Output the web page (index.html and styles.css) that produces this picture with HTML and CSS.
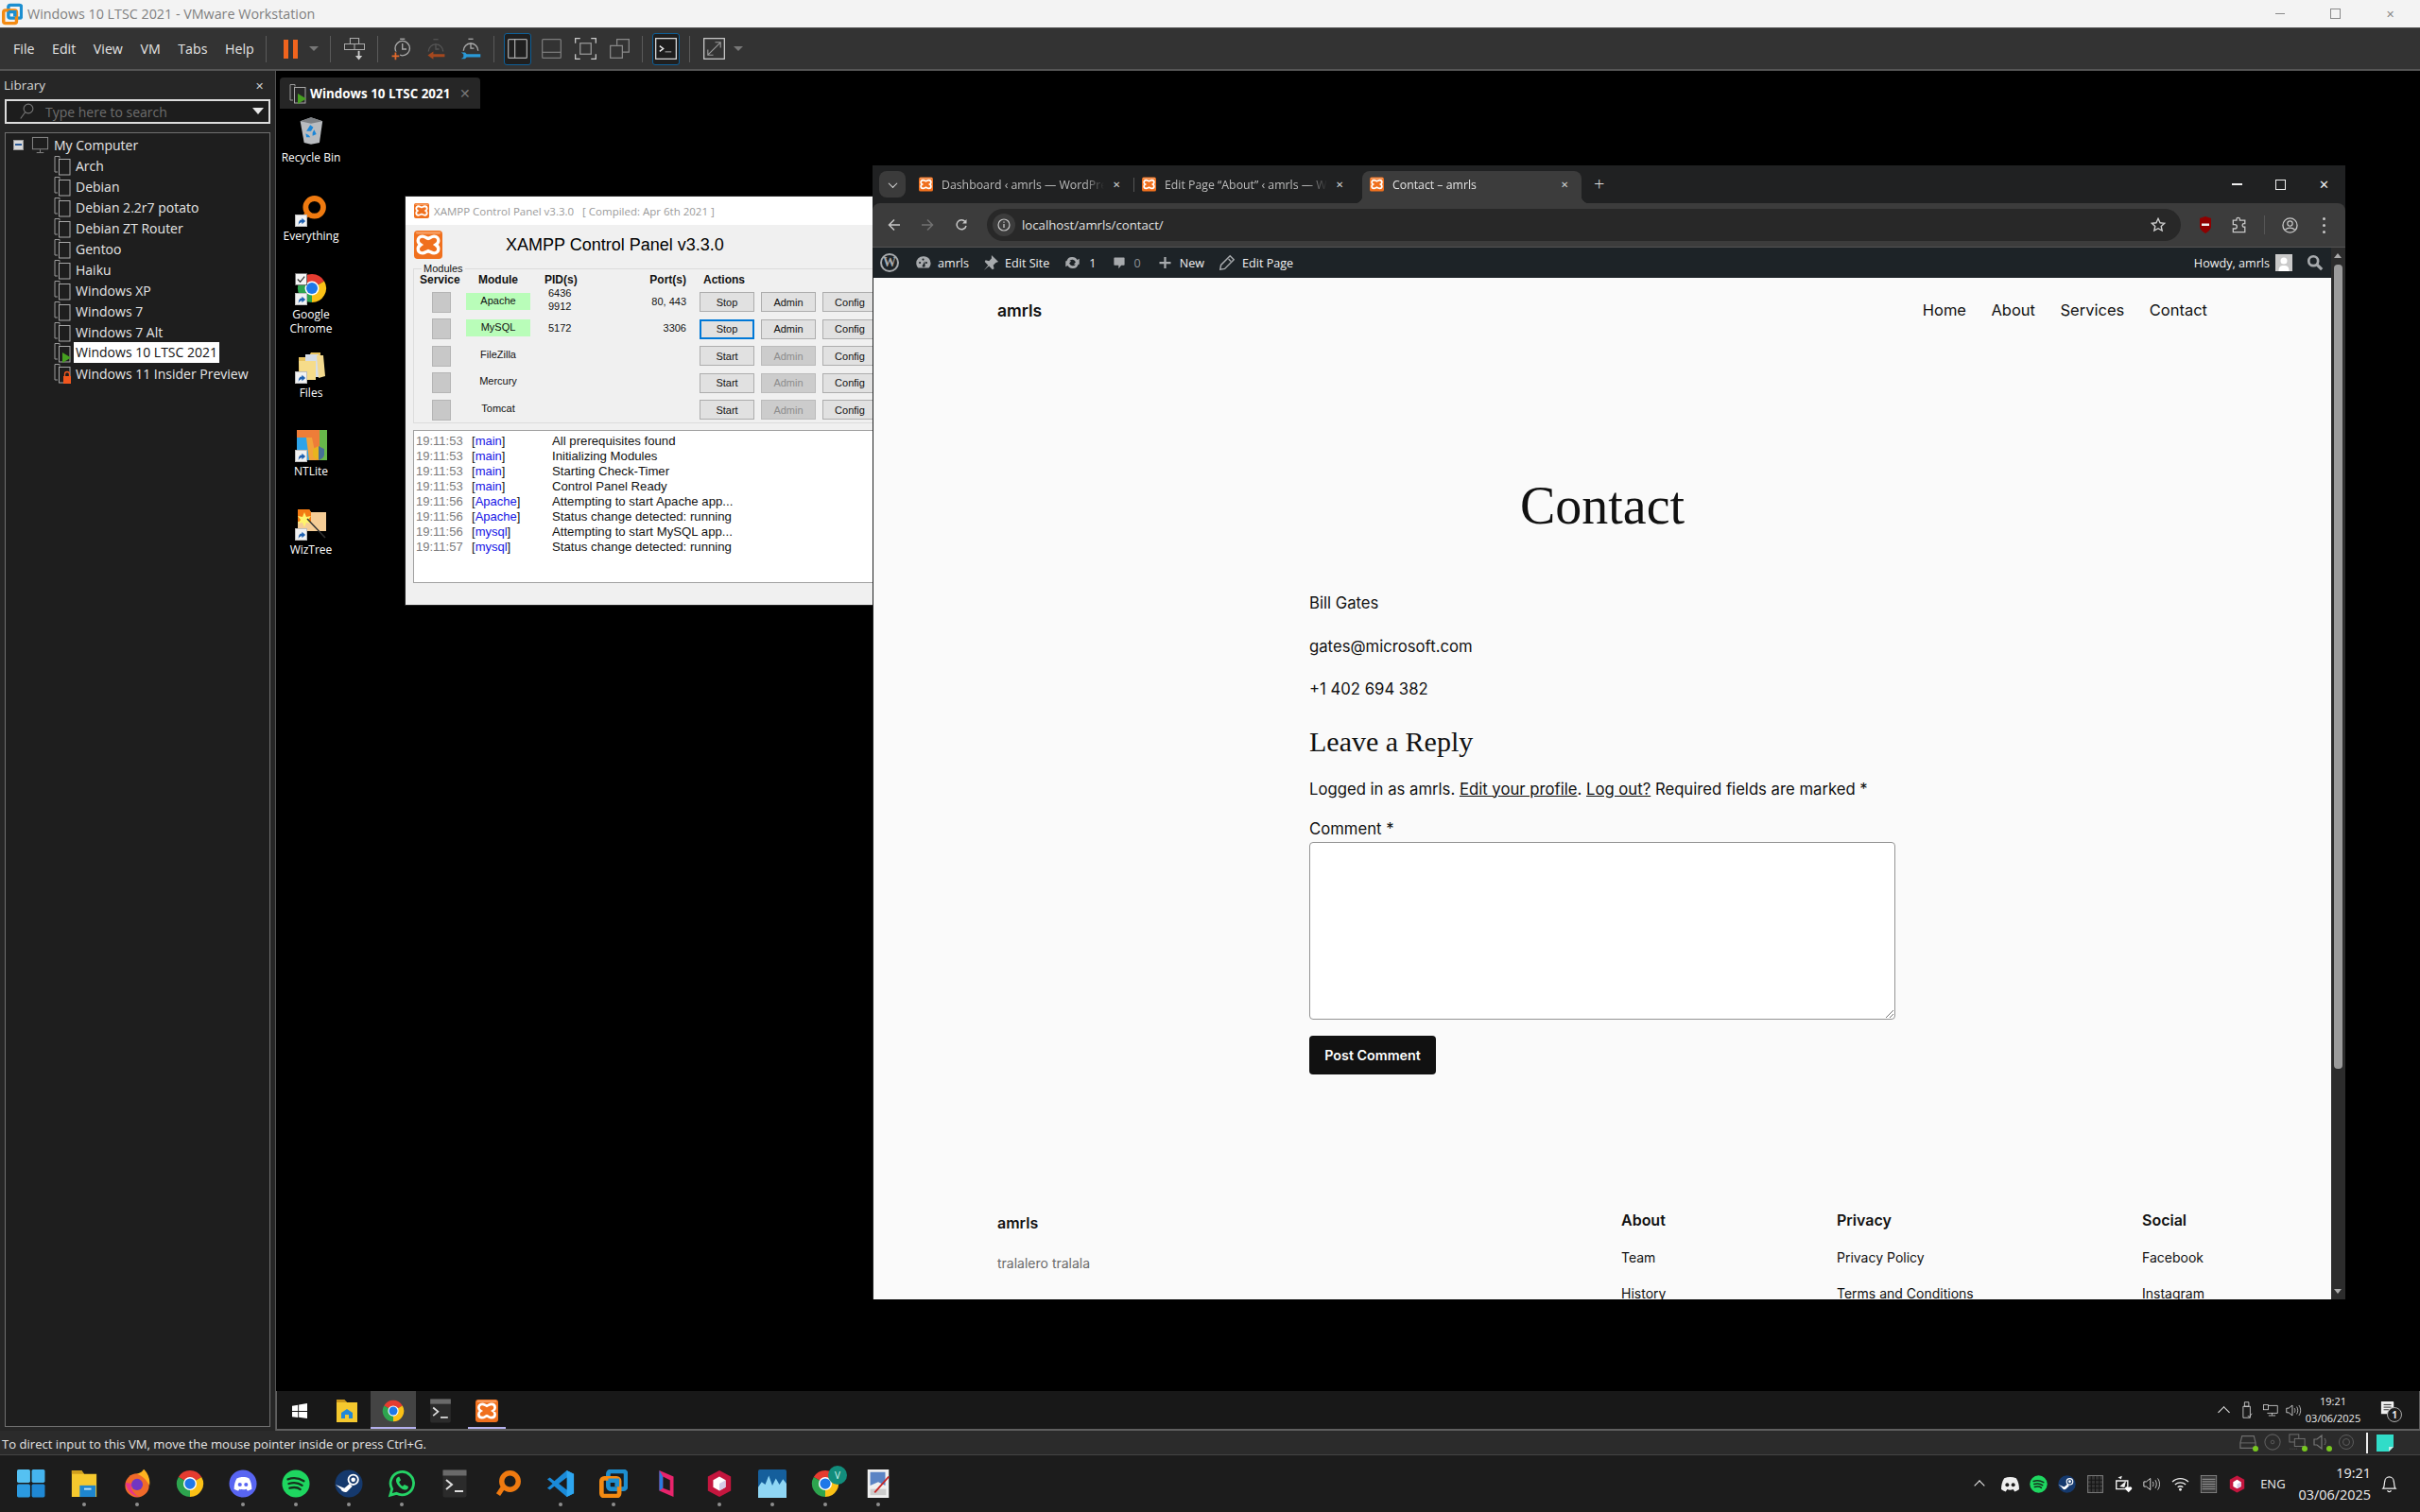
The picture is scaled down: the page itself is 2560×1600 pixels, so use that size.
FILE: index.html
```html
<!DOCTYPE html>
<html lang="en">
<head>
<meta charset="utf-8">
<title>Windows 10 LTSC 2021 - VMware Workstation</title>
<link rel="stylesheet" href="styles.css">
</head>
<body>
<svg class="sprite" width="0" height="0" aria-hidden="true">
  <defs>
    <symbol id="vmw" viewBox="0 0 32 32"><rect x="10" y="2" width="20" height="20" rx="3" fill="none" stroke="#1d8fd0" stroke-width="5"/><rect x="2.5" y="10" width="20" height="20" rx="3" fill="none" stroke="#f38a12" stroke-width="5"/><path d="M10 12.5h10v7" fill="none" stroke="#1d8fd0" stroke-width="5"/></symbol>
    <symbol id="xampp" viewBox="0 0 32 32"><rect width="32" height="32" rx="4" fill="#f0701e"/><rect x="2" y="1" width="28" height="3" rx="1.5" fill="#f79a5c"/><path d="M9.5 6.500C6 6.500 4.500 9 4.500 11.500C4.500 13.500 6 15 7.500 16C6 17 4.500 18.500 4.500 20.500C4.500 23 6 25.500 9.500 25.500C12 25.500 13.500 24 16 23C18.500 24 20 25.500 22.500 25.500C26 25.500 27.500 23 27.500 20.500C27.500 18.500 26 17 24.500 16C26 15 27.500 13.500 27.500 11.500C27.500 9 26 6.500 22.500 6.500C20 6.500 18.500 8 16 9C13.500 8 12 6.500 9.500 6.500Z" fill="none" stroke="#fff" stroke-width="3.600"/></symbol>
    <symbol id="vmi" viewBox="0 0 18 22"><path d="M6 3.500V1.500H1V18h3" fill="none" stroke="#9a9a9a"/><rect x="5.500" y="4.500" width="11.500" height="16.500" fill="none" stroke="#a8a8a8"/></symbol>
    <symbol id="vmplay" viewBox="0 0 18 22"><path d="M6 3.500V1.500H1V18h3" fill="none" stroke="#9a9a9a"/><rect x="5.500" y="4.500" width="11.500" height="16.500" fill="none" stroke="#a8a8a8"/><path d="M9 11l9 5.500-9 5.500z" fill="#46a020"/></symbol>
    <symbol id="vmlock" viewBox="0 0 18 22"><path d="M6 3.500V1.500H1V18h3" fill="none" stroke="#9a9a9a"/><rect x="5.500" y="4.500" width="11.500" height="16.500" fill="none" stroke="#a8a8a8"/><rect x="10" y="14" width="8" height="8" fill="#f0561e"/><path d="M11.500 14v-2a2.500 2.500 0 0 1 5 0v2" fill="none" stroke="#f0561e" stroke-width="1.300"/></symbol>
    <symbol id="monitor" viewBox="0 0 20 20"><rect x="1.500" y="1.500" width="17" height="13" fill="none" stroke="#8a8a8a"/><path d="M10 15v3M6 18.500h8" stroke="#8a8a8a"/></symbol>
    <symbol id="mag" viewBox="0 0 22 24"><circle cx="13" cy="8" r="6.500" fill="none" stroke="#777" stroke-width="1.500"/><path d="M8.500 13L2 22" stroke="#777" stroke-width="1.500"/></symbol>
    <symbol id="snap" viewBox="0 0 24 26"><path d="M7 .5h10v6.500H7zM.5 7h11.500v6.500H.5zM12 7h11.500v6.500H12z" fill="none" stroke="#aaa" stroke-width="1.200"/><path d="M17 15v6" stroke="#ccc" stroke-width="2"/><path d="M13 20.500h8l-4 5z" fill="#ccc"/></symbol>
    <symbol id="clockadd" viewBox="0 0 24 28"><circle cx="14" cy="13" r="9" fill="none" stroke="#aaa" stroke-width="1.600"/><path d="M11 1.500h6" stroke="#aaa" stroke-width="1.600"/><path d="M14 7v7h5" fill="none" stroke="#aaa" stroke-width="1.600"/><rect x="0" y="17" width="11" height="11" fill="#333"/><path d="M5.500 18v9M1 22.500h9" stroke="#e46a2c" stroke-width="2"/></symbol>
    <symbol id="clockback" viewBox="0 0 24 28"><path d="M3 17a9 9 0 1 1 18 0" fill="none" stroke="#555" stroke-width="1.600"/><path d="M9 2h6" stroke="#555" stroke-width="1.500"/><path d="M12 7v7h4" fill="none" stroke="#555" stroke-width="1.500"/><path d="M2 21.500L9 17v3h14v3.500H9v3z" fill="#a4481f"/></symbol>
    <symbol id="clockwrench" viewBox="0 0 24 28"><path d="M3 16a9 9 0 1 1 18 0" fill="none" stroke="#aaa" stroke-width="1.600"/><path d="M9 1.500h6" stroke="#aaa" stroke-width="1.500"/><path d="M12 6v7h4" fill="none" stroke="#aaa" stroke-width="1.500"/><path d="M0 18h5l2 2h17v4H7l-2 2H0l3-2v-4z" fill="#2a9ad8"/></symbol>
    <symbol id="sidebar" viewBox="0 0 22 22"><rect x=".7" y=".7" width="20.600" height="20.600" rx="1" fill="none" stroke="#aaa" stroke-width="1.300"/><path d="M8 1v20" stroke="#aaa" stroke-width="1.300"/></symbol>
    <symbol id="thumb" viewBox="0 0 22 22"><rect x=".7" y=".7" width="20.600" height="20.600" rx="1" fill="none" stroke="#7c7c7c" stroke-width="1.300"/><path d="M1 15h20" stroke="#7c7c7c" stroke-width="1.300"/></symbol>
    <symbol id="full" viewBox="0 0 24 24"><path d="M.7 6V.7H6M18 .7h5.300V6M.7 18v5.300H6M18 23.300h5.300V18" fill="none" stroke="#ccc" stroke-width="1.300"/><rect x="6" y="6" width="12" height="12" fill="none" stroke="#999" stroke-width="1.300"/></symbol>
    <symbol id="unity" viewBox="0 0 22 22"><path d="M8 7V.7h13.300v14H14" fill="none" stroke="#8a8a8a" stroke-width="1.300"/><rect x=".7" y="7.700" width="13.300" height="13.600" fill="none" stroke="#8a8a8a" stroke-width="1.300"/></symbol>
    <symbol id="console" viewBox="0 0 24 24"><rect x=".7" y=".7" width="22.600" height="22.600" fill="#1d1d1d" stroke="#ddd" stroke-width="1.300"/><path d="M5 9l4 3-4 3" fill="none" stroke="#eee" stroke-width="1.500"/><path d="M11 15.500h7" stroke="#999" stroke-width="1.200"/></symbol>
    <symbol id="stretch" viewBox="0 0 24 24"><rect x=".7" y=".7" width="22.600" height="22.600" fill="none" stroke="#ccc" stroke-width="1.300"/><path d="M5 19L19 5M13 5h6v6M5 13v6h6" fill="none" stroke="#999" stroke-width="1.200"/></symbol>
    <symbol id="recycle" viewBox="0 0 32 36"><path d="M2 6l14-5 15 5-4 28-11 2-9-2z" fill="#b9bcc0"/><path d="M2 6l14 3 15-3-15-5z" fill="#7d8084"/><path d="M10 19l5-8 4 3-3 5zM20 17l3 6-5 2v-4zM9 22l4 2 2 3h-5z" fill="#1a86d8"/></symbol>
    <symbol id="eye" viewBox="0 0 34 36"><circle cx="20" cy="15" r="10.500" fill="none" stroke="#ef7a10" stroke-width="6.500"/><path d="M11 23L5 32" stroke="#ef7a10" stroke-width="6"/></symbol>
    <symbol id="short" viewBox="0 0 14 14"><rect width="14" height="14" fill="#f2f2f2"/><rect x=".5" y=".5" width="13" height="13" fill="none" stroke="#bbb"/><path d="M4 12c0-4 1-6 4-6V4l4 3.500-4 3.500V9c-2 0-3 1-4 3z" fill="#1e60b0"/></symbol>
    <symbol id="chrome" viewBox="0 0 32 32"><path d="M16 16L3 8.500A15 15 0 0 1 29 8.500z" fill="#e53c30"/><path d="M16 16L29 8.500A15 15 0 0 1 16 31z" fill="#fbc116"/><path d="M16 16V31A15 15 0 0 1 3 8.500z" fill="#2da44e"/><circle cx="16" cy="16" r="7.500" fill="#fff"/><circle cx="16" cy="16" r="6" fill="#1f78e8"/></symbol>
    <symbol id="folderd" viewBox="0 0 30 32"><path d="M1 6h10l3-5h10v26H1z" fill="#e8c25e"/><path d="M8 3h14v24H8z" fill="#d5dde8"/><path d="M20 4h7l2 22-7 2z" fill="#f3d98e"/><path d="M1 10h18v20H3z" fill="#f6dc8a"/></symbol>
    <symbol id="ntlite" viewBox="0 0 32 32"><rect width="32" height="32" fill="#66b84a"/><path d="M0 0h24v32H0z" fill="#ee7d38"/><path d="M0 8h14v24H0z" fill="#2ea3e8"/><path d="M10 8h6l5 24h-8z" fill="#f2a23a"/><path d="M17 20l6-3 6 3v6c0 3-3 5-6 6-3-1-6-3-6-6z" fill="#e8b41e"/><path d="M23 17v15c3-1 6-3 6-6v-6z" fill="#1d5fb4" opacity=".8"/></symbol>
    <symbol id="wiz" viewBox="0 0 32 32"><path d="M1 1h12l2 3h16v20H1z" fill="#f5cd96"/><path d="M1 1h12l2 3v10H1z" fill="#f27a12"/><path d="M8 4l2 5 5-1-3 4 3 4-5-1-2 5-2-5-5 1 3-4-3-4 5 1z" fill="#fff46c"/><path d="M11 11l19 20" stroke="#333" stroke-width="1.500"/></symbol>
    <symbol id="check" viewBox="0 0 14 14"><rect width="14" height="14" fill="#f5f5f5"/><rect x=".5" y=".5" width="13" height="13" fill="none" stroke="#666"/><path d="M3 7l3 3 5-6" fill="none" stroke="#333" stroke-width="1.300"/></symbol>
    <symbol id="win10" viewBox="0 0 18 18"><path d="M0 3l7-1v7H0zM8 1.800L18 0v9H8zM0 10h7v7l-7-1zM8 10h10v8L8 16.500z" fill="#fff"/></symbol>
    <symbol id="explorer" viewBox="0 0 24 26"><path d="M1 1h8l3 3h11v21H1z" fill="#f4c82e"/><path d="M1 1h8l3 3H1z" fill="#c9961a"/><path d="M6 21v-6l6-4 6 4v6h-4v-4h-4v4z" fill="#2188d8"/></symbol>
    <symbol id="term" viewBox="0 0 26 30"><rect x=".5" y=".5" width="25" height="29" rx="2" fill="#2b2b2b"/><rect x=".5" y=".5" width="25" height="6" fill="#6a6a6a"/><path d="M4 11l6 5-6 5" fill="none" stroke="#ddd" stroke-width="2"/><path d="M13 23h9" stroke="#ddd" stroke-width="2"/></symbol>
    <symbol id="win11" viewBox="0 0 28 28"><rect width="13" height="13" rx="1.500" fill="#55c1f2"/><rect x="14.500" width="13" height="13" rx="1.500" fill="#45b4ee"/><rect y="14.500" width="13" height="13" rx="1.500" fill="#2b9ae0"/><rect x="14.500" y="14.500" width="13" height="13" rx="1.500" fill="#1f88d4"/></symbol>
    <symbol id="files11" viewBox="0 0 30 32"><path d="M1 1h11l3 4h14v26H1z" fill="#f6c92e"/><path d="M1 1h11l3 4H1z" fill="#cf9f1e"/><rect x="10" y="18" width="18" height="13" fill="#1e86cf"/><rect x="15" y="21" width="8" height="2" fill="#bfe3fa"/></symbol>
    <symbol id="firefox" viewBox="0 0 30 32"><circle cx="15" cy="18" r="13.500" fill="#f06a2a"/><path d="M15 5c4-1 8-4 7-6 6 6 8 12 7 19-3-6-8-11-14-13z" fill="#ffb31f"/><circle cx="15" cy="17" r="6.500" fill="#7236c2"/><path d="M2 15c1 8 7 15 16 16-7-3-11-9-9-15z" fill="#e8348c"/></symbol>
    <symbol id="discord" viewBox="0 0 32 32"><circle cx="16" cy="16" r="15.500" fill="#5865f2"/><path d="M9 10c4-2 10-2 14 0 2 3 3 8 3 12-2 1-4 2-5 2l-1-2c-3 1-5 1-8 0l-1 2c-1 0-3-1-5-2 0-4 1-9 3-12z" fill="#fff"/><circle cx="12.500" cy="17" r="2.200" fill="#5865f2"/><circle cx="19.500" cy="17" r="2.200" fill="#5865f2"/></symbol>
    <symbol id="discordw" viewBox="0 0 24 20"><path d="M4 2C9 0 15 0 20 2c3 4 4 10 4 15-2 1-4 3-6 3l-2-3c-3 1-5 1-8 0l-2 3c-2 0-4-2-6-3 0-5 1-11 4-15z" fill="#eee"/><circle cx="8" cy="11" r="2.500" fill="#1c1c1c"/><circle cx="16" cy="11" r="2.500" fill="#1c1c1c"/></symbol>
    <symbol id="spotify" viewBox="0 0 32 32"><circle cx="16" cy="16" r="15.500" fill="#1ed760"/><path d="M7 11c6-2 13-1 18 2M8 16c5-1.500 11-1 15 2M9 21c4-1 9-1 12 1.500" fill="none" stroke="#16301d" stroke-width="2.500" stroke-linecap="round"/></symbol>
    <symbol id="steam" viewBox="0 0 32 32"><circle cx="16" cy="16" r="15.500" fill="#15396d"/><circle cx="21" cy="11.500" r="5.500" fill="none" stroke="#fff" stroke-width="2"/><circle cx="21" cy="11.500" r="2.500" fill="#fff"/><path d="M1 17l10 4 6-5 3 3-6 6a5 5 0 0 1-7-3z" fill="#fff"/></symbol>
    <symbol id="whatsapp" viewBox="0 0 32 32"><path d="M3 29l2-7A13 13 0 1 1 10 27z" fill="none" stroke="#25d366" stroke-width="3"/><path d="M11 9c-2 2-2 5 1 9 3 4 6 5 9 5 2-1 3-3 2-4l-4-2-2 2c-2-1-3-3-4-5l2-2-2-4z" fill="#25d366"/></symbol>
    <symbol id="vscode" viewBox="0 0 32 32"><path d="M23 1l8 4v22l-8 4L9 19l-5 4-3-2 6-5-6-5 3-2 5 4z" fill="#1a8ad8"/><path d="M23 1l8 4v22l-8 4z" fill="#2da6f0"/><path d="M23 9l-9 7 9 7z" fill="#1c1c1c"/></symbol>
    <symbol id="pink" viewBox="0 0 20 32"><path d="M2 1l16 7v23L2 24z" fill="#e8246c"/><path d="M6 8l8 4v12l-8-3z" fill="#1c1c1c"/><path d="M2 1v23l4-3V8z" fill="#2a7be0"/></symbol>
    <symbol id="hex" viewBox="0 0 28 32"><path d="M14 1l13 7v16l-13 7-13-7V8z" fill="#c4163e"/><path d="M14 8l7 4v8l-7 4-7-4v-8z" fill="#fff"/><path d="M14 16l7-4v8l-7 4z" fill="#d6cbe8"/></symbol>
    <symbol id="wave" viewBox="0 0 32 32"><rect width="32" height="32" rx="2" fill="#155f9c"/><path d="M0 20l4-6 4 3 4-10 4 11 4-8 4 7 4-6 4 5v16H0z" fill="#8fd6f4"/></symbol>
    <symbol id="pen" viewBox="0 0 24 32"><rect width="24" height="32" fill="#f0f0f0"/><path d="M3 3h17v15L12 14l-9 4z" fill="#5b84c4"/><rect x="3" y="22" width="18" height="7" fill="#ccc"/><path d="M8 26L24 8" stroke="#c82424" stroke-width="2"/></symbol>
    <symbol id="usb" viewBox="0 0 14 24"><path d="M3.500 1h6v6h-6zM1.500 7h10v16h-10z" fill="#1c1c1c" stroke="#eee"/><path d="M8 20l2 2 4-5" fill="none" stroke="#ddd"/></symbol>
    <symbol id="netw" viewBox="0 0 22 18"><path d="M5 2h16v11H6M13 13v3M8 16.500h10" fill="none" stroke="#eee"/><rect x=".5" y="1" width="7" height="7" fill="#1c1c1c" stroke="#eee"/></symbol>
    <symbol id="speaker" viewBox="0 0 22 18"><path d="M1 6h3l5-4v14l-5-4H1z" fill="none" stroke="#eee"/><path d="M12 6c1 2 1 4 0 6M15 4c2 3 2 7 0 10M18 2c3 4 3 10 0 14" fill="none" stroke="#ddd"/></symbol>
    <symbol id="note" viewBox="0 0 18 18"><path d="M1 1h14a1 1 0 0 1 1 1v11h-3v3H1z" fill="#eee"/><path d="M4 5h9M4 8h9M4 11h6" stroke="#1c1c1c"/></symbol>
    <symbol id="hdd" viewBox="0 0 20 16"><path d="M3 1h14l2 8v6H1V9z" fill="none" stroke="#6e6e6e" stroke-width="1.300"/><path d="M1 9h18" stroke="#6e6e6e"/></symbol>
    <symbol id="cd" viewBox="0 0 20 20"><circle cx="10" cy="10" r="9" fill="none" stroke="#5c5c5c" stroke-width="1.200"/><circle cx="10" cy="10" r="2" fill="none" stroke="#5c5c5c"/></symbol>
    <symbol id="netvm" viewBox="0 0 20 20"><rect x="1" y="1" width="11" height="9" fill="none" stroke="#757575"/><rect x="7" y="6" width="12" height="9" fill="#2b2b2b" stroke="#757575"/><path d="M1 18h10" stroke="#555" stroke-dasharray="1 1"/></symbol>
    <symbol id="soundvm" viewBox="0 0 18 18"><path d="M1 6h3l5-4v14l-5-4H1z" fill="none" stroke="#757575" stroke-width="1.200"/><path d="M12 5c1.500 2 1.500 5 0 7" fill="none" stroke="#757575"/></symbol>
    <symbol id="webcam" viewBox="0 0 18 18"><circle cx="9" cy="9" r="7.500" fill="none" stroke="#5c5c5c"/><circle cx="9" cy="9" r="3.500" fill="none" stroke="#5c5c5c"/></symbol>
    <symbol id="sticky" viewBox="0 0 18 18"><path d="M0 0h18v13l-5 5H0z" fill="#31dcc8"/><path d="M13 18v-5h5z" fill="#bfeee8"/></symbol>
    <symbol id="trayg" viewBox="0 0 16 18"><rect x=".5" y=".5" width="15" height="17" fill="#333" stroke="#777"/><path d="M4 1v16M8 1v16M12 1v16M1 5h14M1 9h14M1 13h14" stroke="#151515"/></symbol>
    <symbol id="sync" viewBox="0 0 22 22"><path d="M2 7h14v10H2z" fill="none" stroke="#eee" stroke-width="1.600"/><path d="M4 3l5-2-1 4zM6 14l8-7-2 8z" fill="#eee"/><path d="M17 21l-4-4c-1-2 2-4 4-2 2-2 5 0 4 2z" fill="#fff"/></symbol>
    <symbol id="wifi" viewBox="0 0 20 16"><path d="M1 5.500c5-5 13-5 18 0M4 8.500c3.500-3 8.500-3 12 0M7 11.500c2-1.500 4-1.500 6 0" fill="none" stroke="#eee" stroke-width="1.300"/><circle cx="10" cy="14" r="1.500" fill="#eee"/></symbol>
    <symbol id="tray2" viewBox="0 0 20 22"><rect x=".5" y=".5" width="19" height="21" fill="#3a3a3a" stroke="#888"/><path d="M2 5h16M2 8h16M2 11h16M2 14h16M2 17h16" stroke="#aaa"/></symbol>
    <symbol id="bell" viewBox="0 0 18 20"><path d="M2 15c2-2 1-5 2-8a5 5 0 0 1 10 0c1 3 0 6 2 8z" fill="none" stroke="#eee" stroke-width="1.300"/><path d="M7 17c.5 2 3.500 2 4 0" fill="none" stroke="#eee" stroke-width="1.300"/></symbol>
    <symbol id="shield" viewBox="0 0 14 18"><path d="M1 2l6-2 6 2v8c0 4-3 6-6 8-3-2-6-4-6-8z" fill="#8f0000"/><rect x="3" y="7.500" width="8" height="2.500" fill="#eee"/></symbol>
    <symbol id="ext" viewBox="0 0 18 20"><path d="M1.500 4.500h4v-1a2 2 0 0 1 4 0v1h6v4h-1a2 2 0 0 0 0 4h1v6h-14v-4h2a2 2 0 0 0 0-5h-2z" fill="none" stroke="#c7c7c7" stroke-width="1.500"/></symbol>
    <symbol id="profile" viewBox="0 0 18 18"><circle cx="9" cy="9" r="8" fill="none" stroke="#c7c7c7" stroke-width="1.400"/><circle cx="9" cy="7" r="2.800" fill="none" stroke="#c7c7c7" stroke-width="1.300"/><path d="M3.500 14c3-3 8-3 11 0" fill="none" stroke="#c7c7c7" stroke-width="1.300"/></symbol>
    <symbol id="star" viewBox="0 0 18 18"><path d="M9 1.500l2.300 5 5.200.6-3.900 3.500 1.100 5.200L9 13.200l-4.700 2.600 1.100-5.200L1.500 7.100l5.200-.6z" fill="none" stroke="#d0d0d0" stroke-width="1.500"/></symbol>
    <symbol id="back" viewBox="0 0 14 14"><path d="M13 7H2M7 1.500L1.500 7 7 12.500" fill="none" stroke="currentColor" stroke-width="1.500"/></symbol>
    <symbol id="forward" viewBox="0 0 14 14"><path d="M1 7h11M7 1.500L12.500 7 7 12.500" fill="none" stroke="currentColor" stroke-width="1.500"/></symbol>
    <symbol id="reload" viewBox="0 0 14 14"><path d="M12 8a5 5 0 1 1-1-4.500" fill="none" stroke="#c7c7c7" stroke-width="1.500"/><path d="M12.500 1v4.500H8z" fill="#c7c7c7"/></symbol>
    <symbol id="info" viewBox="0 0 14 14"><circle cx="7" cy="7" r="6" fill="none" stroke="#c7c7c7" stroke-width="1.200"/><path d="M7 6v4M7 3.500v1.200" stroke="#c7c7c7" stroke-width="1.300"/></symbol>
    <symbol id="dash-home" viewBox="0 0 20 20"><path d="M10 2a8.500 8.500 0 0 0-8.500 8.500c0 2.500 1 4.500 2.500 6h13c1.500-1.500 2.500-3.500 2.500-6A8.500 8.500 0 0 0 10 2z" fill="#a7aaad"/><circle cx="6" cy="10" r="1.300" fill="#1d2327"/><circle cx="10" cy="6" r="1.300" fill="#1d2327"/><circle cx="14" cy="10" r="1.300" fill="#1d2327"/><path d="M9 14l3-6 .5 6a1.800 1.800 0 0 1-3.500 0z" fill="#1d2327"/></symbol>
    <symbol id="dash-pin" viewBox="0 0 20 20"><path d="M11 1l8 8-3 1-3 3 1 4-2 1-4-4-6 5 5-6-4-4 1-2 4 1 3-3z" fill="#a7aaad"/></symbol>
    <symbol id="dash-update" viewBox="0 0 20 20"><path d="M10 3a7 7 0 0 1 6 3.500L18.500 5v7h-7l2.500-2.500A4.500 4.500 0 0 0 6 8H2.800A7 7 0 0 1 10 3zM10 17a7 7 0 0 1-6-3.500L1.500 15V8h7L6 10.500A4.500 4.500 0 0 0 14 12h3.200A7 7 0 0 1 10 17z" fill="#a7aaad"/></symbol>
    <symbol id="dash-comment" viewBox="0 0 20 20"><path d="M3 2h14a1 1 0 0 1 1 1v10a1 1 0 0 1-1 1h-4l-4 5v-5H3a1 1 0 0 1-1-1V3a1 1 0 0 1 1-1z" fill="#a7aaad"/></symbol>
    <symbol id="dash-plus" viewBox="0 0 20 20"><path d="M8.500 2h3v6.500H18v3h-6.500V18h-3v-6.500H2v-3h6.500z" fill="#a7aaad"/></symbol>
    <symbol id="dash-pencil" viewBox="0 0 20 20"><path d="M14 1l5 5L7 18l-6 1 1-6zM12 5l3 3" fill="none" stroke="#a7aaad" stroke-width="1.800"/></symbol>
    <symbol id="dash-search" viewBox="0 0 20 20"><circle cx="8" cy="8" r="5.500" fill="none" stroke="#a7aaad" stroke-width="3"/><path d="M12 12l6 6" stroke="#a7aaad" stroke-width="3.500"/></symbol>
    <symbol id="avatar" viewBox="0 0 18 18"><rect width="18" height="18" fill="#c9c9c9"/><circle cx="9" cy="7" r="3.500" fill="#fff"/><path d="M3.500 18c0-5 2-6 5.500-6s5.500 1 5.500 6z" fill="#fff"/></symbol>
  </defs>
</svg>

<div class="app">
  <header class="titlebar">
    <svg class="ic-logo"><use href="#vmw"/></svg>
    <span class="title-text">Windows 10 LTSC 2021 - VMware Workstation</span>
    <div class="winctl">
      <span class="wc wc-min"></span>
      <span class="wc wc-max"></span>
      <span class="wc wc-close">&#10005;</span>
    </div>
  </header>

  <nav class="toolbar">
    <div class="menu"><span>File</span><span>Edit</span><span>View</span><span>VM</span><span>Tabs</span><span>Help</span></div>
    <i class="sep"></i>
    <div class="slot slot-pause"><span class="pause"></span><span class="caret"></span></div>
    <i class="sep"></i>
    <div class="slot slot-snap"><svg class="ti ti-22"><use href="#snap"/></svg></div>
    <i class="sep"></i>
    <div class="slot slot-clocks"><svg class="ti ti-22"><use href="#clockadd"/></svg><svg class="ti ti-22"><use href="#clockback"/></svg><svg class="ti ti-22"><use href="#clockwrench"/></svg></div>
    <i class="sep"></i>
    <div class="slot slot-views">
      <span class="tbtn on"><svg class="ti ti-21"><use href="#sidebar"/></svg></span>
      <span class="tbtn"><svg class="ti ti-21"><use href="#thumb"/></svg></span>
      <span class="tbtn"><svg class="ti ti-23"><use href="#full"/></svg></span>
      <span class="tbtn"><svg class="ti ti-21"><use href="#unity"/></svg></span>
    </div>
    <i class="sep"></i>
    <div class="slot slot-console"><span class="tbtn on"><svg class="ti ti-23"><use href="#console"/></svg></span></div>
    <i class="sep"></i>
    <div class="slot slot-stretch"><svg class="ti ti-23"><use href="#stretch"/></svg><span class="caret"></span></div>
  </nav>

  <main class="work">
    <aside class="library">
      <div class="lib-head"><span>Library</span><span class="lib-x">&#10005;</span></div>
      <div class="lib-search"><svg class="lib-mag"><use href="#mag"/></svg><span>Type here to search</span><i class="lib-caret"></i></div>
      <div class="tree">
        <div class="tree-root"><span class="expander"></span><svg class="tree-mon"><use href="#monitor"/></svg><span>My Computer</span></div>
        <div class="tree-item"><svg class="vm"><use href="#vmi"/></svg><span>Arch</span></div>
        <div class="tree-item"><svg class="vm"><use href="#vmi"/></svg><span>Debian</span></div>
        <div class="tree-item"><svg class="vm"><use href="#vmi"/></svg><span>Debian 2.2r7 potato</span></div>
        <div class="tree-item"><svg class="vm"><use href="#vmi"/></svg><span>Debian ZT Router</span></div>
        <div class="tree-item"><svg class="vm"><use href="#vmi"/></svg><span>Gentoo</span></div>
        <div class="tree-item"><svg class="vm"><use href="#vmi"/></svg><span>Haiku</span></div>
        <div class="tree-item"><svg class="vm"><use href="#vmi"/></svg><span>Windows XP</span></div>
        <div class="tree-item"><svg class="vm"><use href="#vmi"/></svg><span>Windows 7</span></div>
        <div class="tree-item"><svg class="vm"><use href="#vmi"/></svg><span>Windows 7 Alt</span></div>
        <div class="tree-item"><svg class="vm"><use href="#vmplay"/></svg><span class="selected">Windows 10 LTSC 2021</span></div>
        <div class="tree-item"><svg class="vm"><use href="#vmlock"/></svg><span>Windows 11 Insider Preview</span></div>
      </div>
    </aside>

    <section class="guest">
      <div class="vm-tabs">
        <div class="vm-tab"><svg class="vm"><use href="#vmplay"/></svg><b>Windows 10 LTSC 2021</b><span class="vm-tab-x">&#10005;</span></div>
      </div>
      <div class="desktop">
        <div class="shortcuts">
          <div class="sc"><span class="sc-art"><svg class="art art-bin"><use href="#recycle"/></svg></span><span class="sc-label">Recycle Bin</span></div>
          <div class="sc"><span class="sc-art"><svg class="art"><use href="#eye"/></svg><svg class="badge"><use href="#short"/></svg></span><span class="sc-label">Everything</span></div>
          <div class="sc"><span class="sc-art"><svg class="art"><use href="#chrome"/></svg><svg class="badge"><use href="#short"/></svg><svg class="badge badge-top"><use href="#check"/></svg></span><span class="sc-label">Google<br>Chrome</span></div>
          <div class="sc"><span class="sc-art"><svg class="art"><use href="#folderd"/></svg><svg class="badge"><use href="#short"/></svg></span><span class="sc-label">Files</span></div>
          <div class="sc"><span class="sc-art"><svg class="art"><use href="#ntlite"/></svg><svg class="badge"><use href="#short"/></svg></span><span class="sc-label">NTLite</span></div>
          <div class="sc"><span class="sc-art"><svg class="art"><use href="#wiz"/></svg><svg class="badge"><use href="#short"/></svg></span><span class="sc-label">WizTree</span></div>
        </div>

        <article class="xampp">
          <div class="x-title"><svg class="x-fav"><use href="#xampp"/></svg><span>XAMPP Control Panel v3.3.0 &nbsp; [ Compiled: Apr 6th 2021 ]</span></div>
          <div class="x-body">
            <div class="x-head"><svg class="x-logo"><use href="#xampp"/></svg><h2>XAMPP Control Panel v3.3.0</h2></div>
            <fieldset class="x-group">
              <legend>Modules</legend>
              <div class="x-labels"><b>Service</b><b>Module</b><b>PID(s)</b><b class="tr">Port(s)</b><b class="x-act">Actions</b></div>
              <div class="x-grid"><i class="stat"></i><span class="mod on">Apache</span><span class="pid">6436<br>9912</span><span class="port">80, 443</span><span class="btn">Stop</span><span class="btn">Admin</span><span class="btn">Config</span></div>
              <div class="x-grid"><i class="stat"></i><span class="mod on">MySQL</span><span class="pid pid-1">5172</span><span class="port">3306</span><span class="btn focus">Stop</span><span class="btn">Admin</span><span class="btn">Config</span></div>
              <div class="x-grid"><i class="stat"></i><span class="mod">FileZilla</span><span></span><span></span><span class="btn">Start</span><span class="btn off">Admin</span><span class="btn">Config</span></div>
              <div class="x-grid"><i class="stat"></i><span class="mod">Mercury</span><span></span><span></span><span class="btn">Start</span><span class="btn off">Admin</span><span class="btn">Config</span></div>
              <div class="x-grid"><i class="stat"></i><span class="mod">Tomcat</span><span></span><span></span><span class="btn">Start</span><span class="btn off">Admin</span><span class="btn">Config</span></div>
            </fieldset>
            <div class="x-log">
              <div class="l"><time>19:11:53</time><span class="tag">[<em>main</em>]</span><span class="msg">All prerequisites found</span></div>
              <div class="l"><time>19:11:53</time><span class="tag">[<em>main</em>]</span><span class="msg">Initializing Modules</span></div>
              <div class="l"><time>19:11:53</time><span class="tag">[<em>main</em>]</span><span class="msg">Starting Check-Timer</span></div>
              <div class="l"><time>19:11:53</time><span class="tag">[<em>main</em>]</span><span class="msg">Control Panel Ready</span></div>
              <div class="l"><time>19:11:56</time><span class="tag">[<em>Apache</em>]</span><span class="msg">Attempting to start Apache app...</span></div>
              <div class="l"><time>19:11:56</time><span class="tag">[<em>Apache</em>]</span><span class="msg">Status change detected: running</span></div>
              <div class="l"><time>19:11:56</time><span class="tag">[<em>mysql</em>]</span><span class="msg">Attempting to start MySQL app...</span></div>
              <div class="l"><time>19:11:57</time><span class="tag">[<em>mysql</em>]</span><span class="msg">Status change detected: running</span></div>
            </div>
          </div>
        </article>

        <article class="chrome">
          <div class="tabstrip">
            <span class="tab-search"><i class="chev"></i></span>
            <div class="tab"><svg class="fav"><use href="#xampp"/></svg><span class="tab-t">Dashboard ‹ amrls — WordPres</span><span class="tab-x">&#10005;</span></div>
            <i class="tab-sep"></i>
            <div class="tab"><svg class="fav"><use href="#xampp"/></svg><span class="tab-t">Edit Page “About” ‹ amrls — Wo</span><span class="tab-x">&#10005;</span></div>
            <div class="tab active"><svg class="fav"><use href="#xampp"/></svg><span class="tab-t">Contact – amrls</span><span class="tab-x">&#10005;</span></div>
            <span class="tab-new">+</span>
            <div class="cw"><span class="cw-min"></span><span class="cw-max"></span><span class="cw-x">&#10005;</span></div>
          </div>
          <div class="omni-row">
            <svg class="nv nv-back"><use href="#back"/></svg>
            <svg class="nv nv-fwd"><use href="#forward"/></svg>
            <svg class="nv"><use href="#reload"/></svg>
            <div class="omni"><span class="omni-info"><svg class="nv"><use href="#info"/></svg></span><span class="url">localhost/amrls/contact/</span><svg class="nv nv-star"><use href="#star"/></svg></div>
            <svg class="nv nv-shield"><use href="#shield"/></svg>
            <svg class="nv nv-ext"><use href="#ext"/></svg>
            <i class="omni-sep"></i>
            <svg class="nv nv-prof"><use href="#profile"/></svg>
            <span class="kebab"><i></i><i></i><i></i></span>
          </div>
          <div class="viewport">
            <div class="pagewrap">
              <div class="wpbar">
                <span class="wp-logo"><b>W</b></span>
                <svg class="da da-home"><use href="#dash-home"/></svg><span class="wp-t">amrls</span>
                <svg class="da da-pin"><use href="#dash-pin"/></svg><span class="wp-t">Edit Site</span>
                <svg class="da da-upd"><use href="#dash-update"/></svg><span class="wp-t">1</span>
                <svg class="da da-com"><use href="#dash-comment"/></svg><span class="wp-t wp-dim">0</span>
                <svg class="da da-plus"><use href="#dash-plus"/></svg><span class="wp-t">New</span>
                <svg class="da da-pen"><use href="#dash-pencil"/></svg><span class="wp-t">Edit Page</span>
                <span class="wp-right"><span class="wp-t">Howdy, amrls</span><svg class="wp-av"><use href="#avatar"/></svg><svg class="da da-find"><use href="#dash-search"/></svg></span>
              </div>
              <div class="site">
                <div class="site-head"><strong>amrls</strong><div class="site-nav"><span>Home</span><span>About</span><span>Services</span><span>Contact</span></div></div>
                <h1>Contact</h1>
                <div class="col">
                  <p>Bill Gates</p>
                  <p>gates@microsoft.com</p>
                  <p>+1 402 694 382</p>
                  <h3>Leave a Reply</h3>
                  <p class="logged">Logged in as amrls. <u>Edit your profile</u>. <u>Log out?</u> Required fields are marked *</p>
                  <label class="lab">Comment *</label>
                  <div class="ta"><span class="grip"></span></div>
                  <span class="post">Post Comment</span>
                </div>
                <footer class="foot">
                  <div><strong class="foot-brand">amrls</strong><span class="foot-tag">tralalero tralala</span></div>
                  <div><b>About</b><span>Team</span><span>History</span></div>
                  <div><b>Privacy</b><span>Privacy Policy</span><span>Terms and Conditions</span></div>
                  <div><b>Social</b><span>Facebook</span><span>Instagram</span></div>
                </footer>
              </div>
            </div>
            <div class="sbar"><i class="sb-up"></i><i class="sb-thumb"></i><i class="sb-down"></i></div>
          </div>
        </article>
      </div>

      <div class="g-task">
        <span class="gt"><svg class="g-win"><use href="#win10"/></svg></span>
        <span class="gt"><svg class="g-ic"><use href="#explorer"/></svg></span>
        <span class="gt gt-active"><svg class="g-ic"><use href="#chrome"/></svg></span>
        <span class="gt"><svg class="g-ic"><use href="#term"/></svg></span>
        <span class="gt gt-open"><svg class="g-ic"><use href="#xampp"/></svg></span>
        <div class="g-tray">
          <i class="chevup"></i>
          <svg class="gi gi-usb"><use href="#usb"/></svg>
          <svg class="gi gi-net"><use href="#netw"/></svg>
          <svg class="gi gi-sp"><use href="#speaker"/></svg>
          <div class="g-clock"><span>19:21</span><span>03/06/2025</span></div>
          <span class="g-note"><svg class="gi gi-note"><use href="#note"/></svg><b>1</b></span>
        </div>
      </div>
    </section>
  </main>

  <div class="status">
    <span class="status-t">To direct input to this VM, move the mouse pointer inside or press Ctrl+G.</span>
    <div class="st-icons">
      <span class="st st-hdd"><svg><use href="#hdd"/></svg><i></i></span>
      <span class="st st-cd"><svg><use href="#cd"/></svg></span>
      <span class="st st-net"><svg><use href="#netvm"/></svg><i></i></span>
      <span class="st st-snd"><svg><use href="#soundvm"/></svg><i></i></span>
      <span class="st st-cam"><svg><use href="#webcam"/></svg></span>
      <i class="st-sep"></i>
      <svg class="st-sticky"><use href="#sticky"/></svg>
    </div>
  </div>

  <footer class="taskbar">
    <div class="tb-apps">
      <span class="tk"><svg><use href="#win11"/></svg></span>
      <span class="tk run"><svg><use href="#files11"/></svg></span>
      <span class="tk run"><svg><use href="#firefox"/></svg></span>
      <span class="tk"><svg><use href="#chrome"/></svg></span>
      <span class="tk run"><svg><use href="#discord"/></svg></span>
      <span class="tk run"><svg><use href="#spotify"/></svg></span>
      <span class="tk run"><svg><use href="#steam"/></svg></span>
      <span class="tk run"><svg><use href="#whatsapp"/></svg></span>
      <span class="tk"><svg><use href="#term"/></svg></span>
      <span class="tk"><svg><use href="#eye"/></svg></span>
      <span class="tk run"><svg><use href="#vscode"/></svg></span>
      <span class="tk run"><svg><use href="#vmw"/></svg></span>
      <span class="tk"><svg><use href="#pink"/></svg></span>
      <span class="tk run"><svg><use href="#hex"/></svg></span>
      <span class="tk run"><svg><use href="#wave"/></svg></span>
      <span class="tk run tk-v"><svg><use href="#chrome"/></svg><em>V</em></span>
      <span class="tk run"><svg><use href="#pen"/></svg></span>
    </div>
    <div class="tb-tray">
      <i class="chevup chevup-sm"></i>
      <svg class="tr-i tr-dis"><use href="#discordw"/></svg>
      <svg class="tr-i"><use href="#spotify"/></svg>
      <svg class="tr-i"><use href="#steam"/></svg>
      <svg class="tr-i"><use href="#trayg"/></svg>
      <svg class="tr-i"><use href="#sync"/></svg>
      <svg class="tr-i"><use href="#speaker"/></svg>
      <svg class="tr-i"><use href="#wifi"/></svg>
      <svg class="tr-i"><use href="#tray2"/></svg>
      <svg class="tr-i"><use href="#hex"/></svg>
      <span class="eng">ENG</span>
      <div class="tb-clock"><span>19:21</span><span>03/06/2025</span></div>
      <svg class="tr-i tr-bell"><use href="#bell"/></svg>
    </div>
  </footer>
</div>
</body>
</html>
```

FILE: styles.css
```css
* { box-sizing: border-box; }
html, body { margin: 0; padding: 0; background: #000; }
body { font-family: "Open Sans", "Noto Sans", sans-serif; }
.sprite { position: absolute; }
i, em { font-style: normal; display: block; }
svg { display: block; }
.app { width: 2560px; height: 1600px; display: flex; flex-direction: column; overflow: hidden; }

/* VMware title bar */
.titlebar { height: 29px; background: #f3f3f3; display: flex; align-items: center; flex: none; }
.ic-logo { width: 22px; height: 24px; margin-left: 2px; }
.title-text { margin-left: 5px; font-size: 14.3px; color: #7f7f7f; }
.winctl { margin-left: auto; display: flex; align-items: center; padding-right: 3px; }
.wc { width: 58px; display: flex; justify-content: center; color: #8a8a8a; font-size: 11px; }
.wc-min::before { content: ""; width: 10px; height: 1px; background: #8a8a8a; }
.wc-max::before { content: ""; width: 9px; height: 9px; border: 1px solid #8a8a8a; }

/* VMware toolbar */
.toolbar { height: 46px; flex: none; background: #333; border-top: 1px solid #4e4e4e; border-bottom: 2px solid #555; display: flex; align-items: center; }
.menu { width: 281px; padding-left: 14px; display: flex; gap: 18.6px; color: #e4e4e4; font-size: 14.2px; }
.sep { width: 1px; height: 28px; background: #5a5a5a; flex: none; }
.slot { display: flex; align-items: center; justify-content: center; flex: none; }
.slot-pause { width: 67px; gap: 12px; padding-left: 6px; }
.slot-snap { width: 49px; }
.slot-clocks { width: 122px; gap: 15px; }
.slot-views { width: 156px; gap: 7px; }
.slot-console { width: 49px; }
.slot-stretch { width: 64px; gap: 9px; padding-left: 6px; }
.pause { width: 15px; height: 20px; border-left: 5px solid #f0641e; border-right: 5px solid #f0641e; }
.caret { width: 0; height: 0; border-left: 5px solid transparent; border-right: 5px solid transparent; border-top: 5px solid #777; }
.ti { flex: none; }
.ti-21 { width: 21px; height: 21px; }
.ti-22 { width: 22px; height: 24px; }
.ti-23 { width: 23px; height: 23px; }
.tbtn { width: 29px; height: 34px; border: 1px solid transparent; border-radius: 3px; display: flex; align-items: center; justify-content: center; }
.tbtn.on { border-color: #0f5f96; background: #1f1f1f; }

/* Work area */
.work { flex: 1; display: flex; min-height: 0; background: #000; }
.library { width: 292px; flex: none; background: #262626; padding: 0 5px 4px; display: flex; flex-direction: column; border-right: 1px solid #555; }
.lib-head { height: 30px; display: flex; justify-content: space-between; align-items: center; color: #d6d6d6; font-size: 13.5px; padding: 0 1px 0 0; margin-left: -1px; }
.lib-x { font-size: 11px; color: #ccc; margin-right: 6px; }
.lib-search { height: 26px; border: 2px solid #ddd; background: #1d1d1d; display: flex; align-items: center; color: #6e6e6e; font-size: 14px; position: relative; }
.lib-mag { width: 17px; height: 18px; margin: 0 11px 0 13px; }
.lib-caret { position: absolute; right: 5px; top: 7px; border-left: 6px solid transparent; border-right: 6px solid transparent; border-top: 7px solid #e8e8e8; }
.tree { flex: 1; margin-top: 9px; border: 1px solid #707070; background: #1e1e1e; padding-top: 1px; }
.tree-root, .tree-item { height: 22px; display: flex; align-items: center; color: #e6e6e6; font-size: 14px; white-space: nowrap; }
.tree-root { padding-left: 8px; }
.expander { width: 11px; height: 11px; background: #d8d8d8; border: 1px solid #999; position: relative; margin-right: 8px; }
.expander::before { content: ""; position: absolute; left: 1px; right: 1px; top: 3px; height: 2px; background: #2a5a9a; }
.tree-mon { width: 19px; height: 19px; margin-right: 5px; }
.tree-item { padding-left: 51px; }
.tree-item .vm { margin-right: 5px; }
.vm { width: 18px; height: 22px; flex: none; margin-right: 3px; }
.selected { background: #fff; color: #111; padding: 0 2px; height: 22px; line-height: 22px; margin-left: -2px; }

/* Guest */
.guest { flex: 1; min-width: 0; display: flex; flex-direction: column; }
.vm-tabs { height: 40px; flex: none; padding: 7px 0 0 4px; background: #000; }
.vm-tab { width: 212px; height: 33px; background: #262626; border-radius: 4px 4px 0 0; display: flex; align-items: center; padding-left: 10px; color: #fff; font-size: 13.4px; white-space: nowrap; }
.vm-tab b { font-weight: 700; margin-left: 1px; }
.vm-tab-x { margin-left: 10px; color: #777; font-size: 14px; }
.desktop { flex: 1; position: relative; min-height: 0; overflow: hidden; background: #000; }

.shortcuts { position: absolute; left: 0; top: 8px; width: 74px; display: grid; grid-auto-rows: 83px; }
.sc { display: flex; flex-direction: column; align-items: center; color: #fff; font-size: 12px; line-height: 15px; text-align: center; }
.sc-art { position: relative; width: 34px; height: 34px; margin-bottom: 2px; display: block; }
.art { width: 32px; height: 32px; position: absolute; left: 2px; top: 0; }
.art-bin { width: 26px; height: 30px; left: 4px; }
.badge { position: absolute; left: 0; bottom: 0; width: 13px; height: 13px; }
.badge-top { bottom: auto; top: 0; }
.sc-label { display: block; }

/* XAMPP */
.xampp { position: absolute; left: 137px; top: 93px; width: 620px; height: 432px; background: #f0f0f0; box-shadow: 0 0 0 1px #222; font-family: "Liberation Sans", sans-serif; color: #111; }
.x-title { height: 30px; background: #fff; display: flex; align-items: center; padding-left: 9px; color: #9a9a9a; font-family: "Open Sans", sans-serif; font-size: 11.5px; }
.x-fav { width: 16px; height: 16px; margin-right: 5px; }
.x-body { padding: 0 0 0 8px; }
.x-head { height: 42px; display: flex; position: relative; }
.x-logo { width: 32px; height: 30px; margin-top: 6px; }
.x-head h2 { margin: 8px 0 0 66px; font-size: 18px; font-weight: 400; line-height: 26px; color: #000; }
.x-group { margin: -1px 0 0; padding: 0 0 2px 6px; height: 169px; border: 1px solid #dcdcdc; border-right: 0; min-inline-size: 0; }
.x-group legend { font-size: 11px; padding: 0 2px; margin-left: 2px; line-height: 11px; }
.x-grid { display: grid; grid-template-columns: 36px 83px 100px 64px 65px 65px 58px; align-items: center; height: 28.5px; font-size: 11px; padding-left: 13px; white-space: nowrap; }
.x-grid > .btn { width: 58px; }
.x-labels { display: flex; font-size: 12px; height: 20px; margin-top: -4.5px; align-items: center; white-space: nowrap; }
.x-labels b:nth-child(1) { width: 62px; }
.x-labels b:nth-child(2) { width: 70px; }
.x-labels b:nth-child(3) { width: 93px; }
.x-labels b:nth-child(4) { width: 57px; }
.x-labels .x-act { margin-left: 18px; }
.stat { width: 20px; height: 22px; background: #c8c8c8; border: 1px solid #b5b5b5; }
.mod { width: 68px; height: 18px; line-height: 17px; text-align: center; margin-top: -2px; }
.mod.on { background: #b9fdb9; }
.pid { padding-left: 4px; line-height: 14px; margin-top: -5px; }
.pid-1 { margin-top: -2px; }
.tr { text-align: right; }
.port { text-align: right; padding-right: 14px; margin-top: -2px; }
.btn { height: 21px; border: 1px solid #adadad; background: #e1e1e1; display: flex; align-items: center; justify-content: center; }
.btn.focus { border: 2px solid #0078d7; }
.btn.off { color: #8d8d8d; background: #ccc; border-color: #bbb; }
.x-log { margin-top: 7px; height: 162px; background: #fff; border: 1px solid #a0a0a0; padding: 3px 0 0 2px; font-size: 13px; line-height: 16px; color: #111; }
.l { display: flex; white-space: nowrap; height: 16px; }
.l time { width: 59px; color: #7b7b7b; }
.tag { width: 85px; }
.tag em { display: inline; color: #1414e6; }
.msg { font-size: 13.2px; }

/* Chrome */
.chrome { position: absolute; left: 631px; top: 60px; width: 1558px; height: 1200px; background: #202122; display: flex; flex-direction: column; color: #ddd; }
.tabstrip { height: 40px; flex: none; padding: 6px 0 0 7px; display: flex; font-family: "Open Sans", sans-serif; font-size: 12.3px; }
.tab-search { width: 28px; height: 28px; border-radius: 8px; background: #3b3b3b; display: flex; justify-content: center; align-items: center; margin-right: 6px; flex: none; }
.chev { width: 7px; height: 7px; border-right: 1.5px solid #ddd; border-bottom: 1.5px solid #ddd; transform: rotate(45deg) translate(-1px,-1px); }
.tab { width: 235px; height: 28px; display: flex; align-items: center; padding: 0 6px 0 8px; flex: none; position: relative; }
.tab.active { width: 232px; height: 34px; background: #3c3c3c; border-radius: 8px 8px 0 0; margin-left: 6px; padding: 0 6px 6px 8px; }
.tab.active::before, .tab.active::after { content: ""; position: absolute; bottom: 0; width: 8px; height: 8px; }
.tab.active::before { left: -8px; background: radial-gradient(circle at 0 0, transparent 8px, #3c3c3c 8.5px); }
.tab.active::after { right: -8px; background: radial-gradient(circle at 100% 0, transparent 8px, #3c3c3c 8.5px); }
.fav { width: 15px; height: 16px; flex: none; margin-right: 9px; }
.tab-t { flex: 1; overflow: hidden; white-space: nowrap; color: #bdbdbd; -webkit-mask-image: linear-gradient(90deg, #000 88%, transparent); mask-image: linear-gradient(90deg, #000 88%, transparent); }
.active .tab-t { color: #e4e4e4; }
.tab-x { width: 16px; margin-left: 9px; font-size: 10px; color: #d0d0d0; flex: none; }
.tab-sep { width: 1px; height: 15px; background: #555; margin-top: 7px; flex: none; }
.tab-new { color: #ddd; font-size: 20px; line-height: 28px; margin-left: 13px; font-weight: 300; }
.cw { margin-left: auto; display: flex; align-items: center; height: 28px; padding-right: 17px; }
.cw-min { width: 11px; height: 1.5px; background: #eee; }
.cw-max { width: 11px; height: 11px; border: 1px solid #eee; margin-left: 35px; }
.cw-x { margin-left: 35px; font-size: 13px; color: #eee; }
.omni-row { height: 47px; flex: none; background: #3c3c3c; border-radius: 8px 8px 0 0; display: flex; align-items: center; padding-left: 16px; border-bottom: 1px solid #525252; }
.nv { width: 14px; height: 14px; flex: none; }
.nv-back { color: #c7c7c7; }
.nv-fwd { color: #717171; margin: 0 22px 0 21px; }
.omni { width: 1263px; height: 34px; margin-left: 20px; border-radius: 17px; background: #282828; display: flex; align-items: center; padding-left: 6px; flex: none; }
.omni-info { width: 24px; height: 24px; border-radius: 50%; background: #3c3c3c; display: flex; justify-content: center; align-items: center; flex: none; }
.url { margin-left: 7px; font-family: "Open Sans", sans-serif; font-size: 13.2px; color: #e0e0e0; }
.nv-star { width: 16px; height: 16px; margin-left: auto; margin-right: 16px; }
.nv-shield { width: 14px; height: 18px; margin-left: 19px; }
.nv-ext { width: 16px; height: 18px; margin-left: 21px; }
.omni-sep { width: 1px; height: 20px; background: #555; margin-left: 18px; }
.nv-prof { width: 17px; height: 17px; margin-left: 18px; }
.kebab { display: flex; flex-direction: column; gap: 4px; margin-left: 26px; }
.kebab i { width: 3px; height: 3px; background: #c7c7c7; border-radius: 50%; }

.viewport { flex: 1; min-height: 0; display: flex; padding-left: 1px; }
.pagewrap { flex: 1; min-width: 0; display: flex; flex-direction: column; overflow: hidden; }
.wpbar { height: 32px; flex: none; background: #1d2327; display: flex; align-items: center; padding-left: 7px; color: #f0f0f1; font-family: "Open Sans", sans-serif; font-size: 12.6px; }
.wp-logo { width: 20px; height: 20px; border-radius: 50%; border: 2px solid #a7aaad; color: #a7aaad; display: flex; align-items: center; justify-content: center; font-family: "Liberation Serif", serif; font-size: 14px; }
.da { height: 18px; flex: none; }
.da-home { width: 17px; margin: 0 7px 0 17px; }
.da-pin { width: 18px; margin: 0 6px 0 14px; }
.da-upd { width: 17px; margin: 0 9px 0 16px; }
.da-com { width: 14px; margin: 0 9px 0 17px; }
.da-plus { width: 15px; margin: 0 8px 0 18px; }
.da-pen { width: 16px; margin: 0 8px 0 16px; }
.wp-dim { color: #8d9194; }
.wp-right { margin-left: auto; display: flex; align-items: center; padding-right: 8px; }
.wp-av { width: 18px; height: 18px; margin-left: 6px; }
.da-find { width: 18px; margin: 0 0 0 15px; }
.site { flex: 1; background: #fafafa; color: #111; font-family: Inter, sans-serif; font-size: 16px; padding: 0 131px; overflow: hidden; }
.site-head { height: 68px; display: flex; justify-content: space-between; align-items: center; }
.site-head strong { font-weight: 600; font-size: 17.5px; }
.site-nav { display: flex; gap: 26.5px; font-size: 16.5px; font-weight: 400; }
.site h1 { margin: 130px 0 0; font: 400 56px/86px "Liberation Serif", serif; text-align: center; }
.col { width: 620px; margin: 46px auto 0; }
.col p { margin: 0 0 17.5px; line-height: 28px; font-size: 16.7px; }
.col h3 { margin: 18.5px 0 0; font: 400 30px/46px "Liberation Serif", serif; }
.col .logged { margin: 13px 0 0; line-height: 28px; font-size: 16.7px; }
.lab { display: block; margin-top: 15px; line-height: 27px; font-size: 16.7px; }
.ta { height: 188px; background: #fff; border: 1px solid #949494; border-radius: 4px; position: relative; }
.grip { position: absolute; right: 1px; bottom: 1px; width: 8px; height: 8px; background: linear-gradient(135deg, transparent 45%, #777 45%, #777 55%, transparent 55%, transparent 70%, #777 70%, #777 80%, transparent 80%); }
.post { display: inline-block; margin-top: 17px; width: 134px; height: 41px; line-height: 41px; text-align: center; background: #111; color: #fff; border-radius: 4px; font-size: 14.3px; font-weight: 600; }
.foot { margin-top: 142px; display: grid; grid-template-columns: 660px 228px 323px auto; font-size: 14px; }
.foot > div { display: flex; flex-direction: column; }
.foot b { font-weight: 600; font-size: 16px; line-height: 24px; margin-bottom: 17.5px; }
.foot span { line-height: 22px; margin-bottom: 16px; white-space: nowrap; }
.foot-brand { font-weight: 600; font-size: 16px; line-height: 24px; margin: 3px 0 20px; }
.foot .foot-tag { color: #6a6a6a; }
.sbar { width: 15px; flex: none; background: #2c2c2c; position: relative; }
.sb-up, .sb-down { position: absolute; left: 3px; border-left: 4px solid transparent; border-right: 4px solid transparent; }
.sb-up { top: 6px; border-bottom: 5px solid #aaa; }
.sb-down { bottom: 6px; border-top: 5px solid #aaa; }
.sb-thumb { position: absolute; left: 3px; top: 18px; width: 9px; height: 851px; background: #9b9b9b; border-radius: 4px; }

/* Guest taskbar */
.g-task { height: 42px; flex: none; background: #181818; border-bottom: 2px solid #5f5f5f; border-left: 1px solid #5f5f5f; border-right: 1px solid #5f5f5f; display: flex; align-items: stretch; gap: 1.5px; padding-right: 5px; }
.gt { width: 48px; height: 40px; display: flex; align-items: center; justify-content: center; flex: none; position: relative; padding-top: 2px; }
.gt-active { background: #444; }
.gt-active::after, .gt-open::after { content: ""; position: absolute; bottom: 0; height: 2px; background: #b5b1ee; }
.gt-active::after { left: 0; right: 0; }
.gt-open::after { left: 4px; right: 4px; }
.g-win { width: 16px; height: 16px; }
.g-ic { width: 24px; height: 26px; }
.g-tray { margin-left: auto; display: flex; align-items: center; color: #eee; font-family: "Open Sans", sans-serif; font-size: 11px; }
.chevup { width: 9px; height: 9px; border-left: 1.2px solid #eee; border-top: 1.2px solid #eee; transform: rotate(45deg); margin-top: 4px; }
.gi { flex: none; }
.gi-usb { width: 14px; height: 18px; margin-left: 13px; }
.gi-net { width: 16px; height: 15px; margin-left: 10px; }
.gi-sp { width: 17px; height: 15px; margin-left: 8px; }
.g-clock { width: 60px; display: flex; flex-direction: column; align-items: center; line-height: 18px; margin-left: 3px; }
.g-note { position: relative; width: 20px; height: 20px; margin: 0 16px 0 20px; }
.gi-note { width: 16px; height: 16px; }
.g-note b { position: absolute; left: 7px; top: 7px; width: 16px; height: 16px; border-radius: 50%; border: 1px solid #aaa; background: #1c1c1c; font-size: 10px; line-height: 14px; text-align: center; }

/* Status bar */
.status { height: 26px; flex: none; background: #2b2b2b; border-bottom: 1px solid #444; display: flex; align-items: center; justify-content: space-between; padding: 0 28px 0 2px; color: #e4e4e4; font-size: 13.1px; }
.status-t { padding-top: 2px; }
.st-icons { display: flex; align-items: center; }
.st { position: relative; width: 20px; height: 20px; display: block; margin-right: 6px; }
.st svg { width: 18px; height: 18px; }
.st i { position: absolute; right: 0; bottom: 1px; width: 6px; height: 6px; border-radius: 50%; background: #78c820; }
.st-sep { width: 2px; height: 22px; background: #eee; margin: 0 9px 0 4px; }
.st-sticky { width: 18px; height: 18px; }

/* Host taskbar */
.taskbar { height: 60px; flex: none; background: #1c1c1c; display: flex; align-items: center; justify-content: space-between; padding-left: 5px; }
.tb-apps { display: flex; }
.tk { width: 56px; height: 60px; display: flex; align-items: flex-start; justify-content: center; position: relative; padding-top: 15px; }
.tk svg { width: 30px; height: 30px; }
.tk.run::after { content: ""; position: absolute; left: 26px; top: 50px; width: 4px; height: 4px; border-radius: 50%; background: #8e8e8e; }
.tk-v em { position: absolute; left: 31px; top: 11px; width: 20px; height: 20px; border-radius: 50%; background: #128d7c; color: #d8f5ee; font-size: 10px; line-height: 20px; text-align: center; }
.tb-tray { display: flex; align-items: center; color: #eee; padding-right: 24px; }
.tr-i { width: 19px; height: 19px; margin-right: 11px; flex: none; }
.chevup-sm { width: 8px; height: 8px; margin-right: 19px; }
.eng { font-size: 13px; margin-left: 4px; }
.tb-clock { display: flex; flex-direction: column; align-items: flex-end; font-size: 14.4px; line-height: 23px; margin-left: 14px; margin-right: 11px; }
.tr-bell { margin: 0; width: 17px; height: 19px; }
```
